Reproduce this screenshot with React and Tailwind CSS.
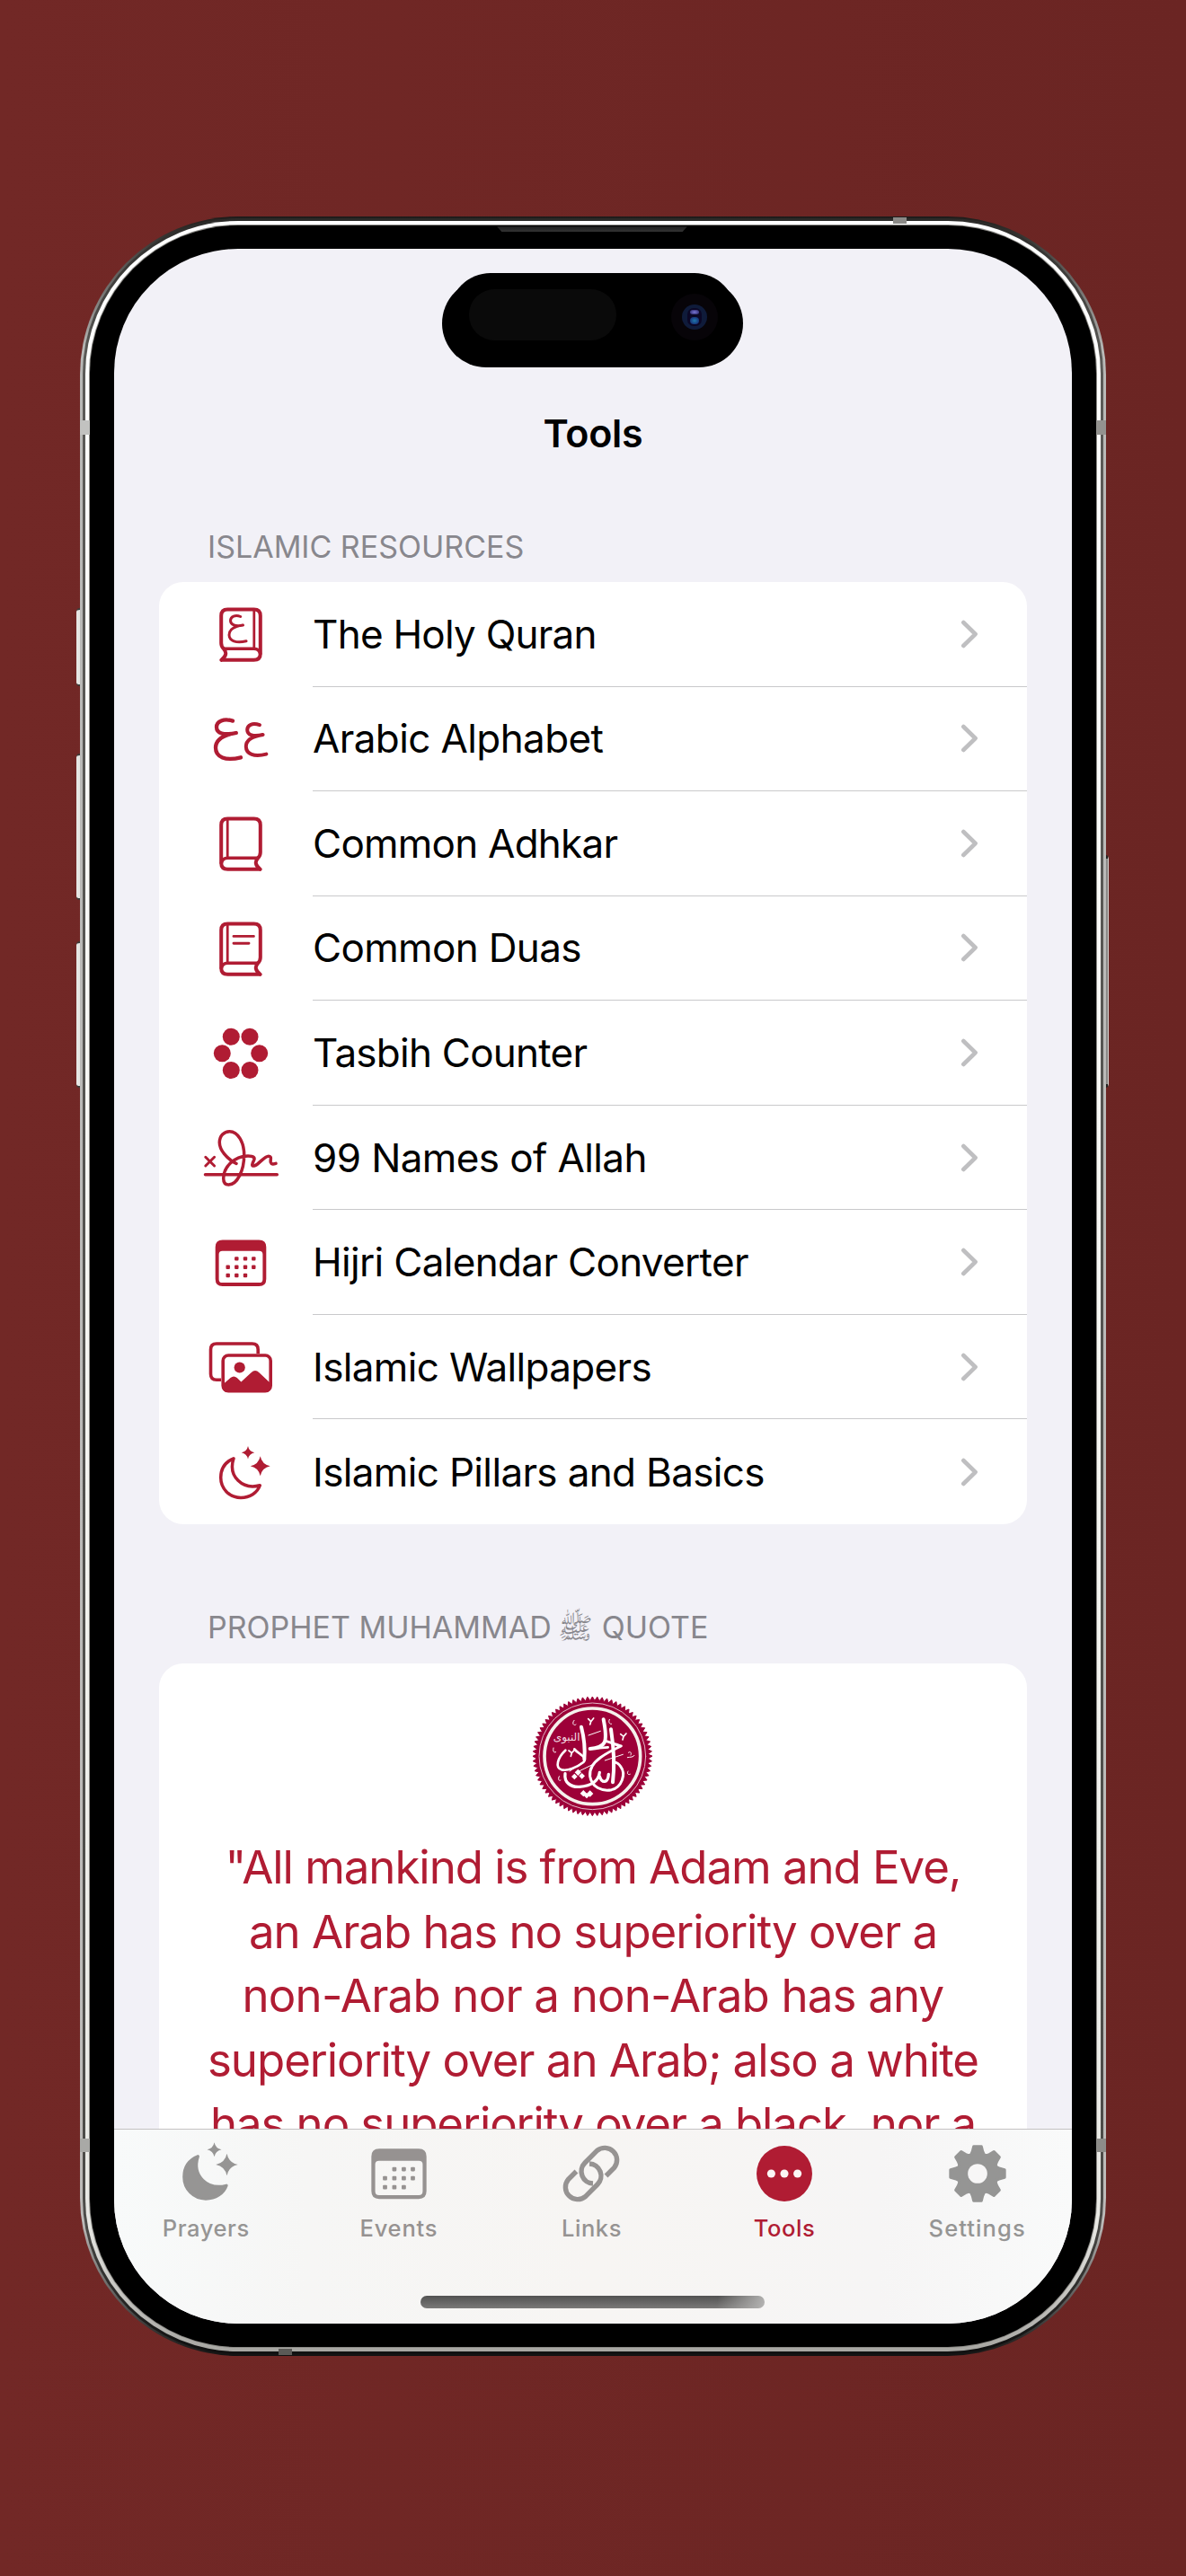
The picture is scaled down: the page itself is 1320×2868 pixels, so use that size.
function Book({ mirrored, children }) {
  return (
    <g>
      <g transform={mirrored ? "translate(96 0) scale(-1 1)" : undefined}>
        <path d="M69.6 64.8H33.5Q26.2 64.8 26.2 57.8V15.6Q26.2 8.5 33.3 8.5H62.7Q69.8 8.5 69.8 15.6V46Q69.8 50 67 52.3Q61.5 58.5 69.6 64.8" strokeWidth="4" />
        <path d="M26.4 58Q27.5 52.3 33.5 52.3H67" strokeWidth="3.6" />
        <path d="M33.2 9V52" strokeWidth="2.8" strokeLinecap="butt" />
      </g>
      {children}
    </g>
  );
}

function Star({ x, y, r }) {
  const k = r * 0.17;
  return (
    <path
      fill="currentColor"
      stroke="none"
      d={`M${x} ${y - r}Q${x + k} ${y - k} ${x + r} ${y}Q${x + k} ${y + k} ${x} ${y + r}Q${x - k} ${y + k} ${x - r} ${y}Q${x - k} ${y - k} ${x} ${y - r}Z`}
    />
  );
}

const MOON = "M40 20.8C31 24.5 25.7 32 25.7 42C25.7 54.5 35.5 64.5 48 64.5C58 64.5 66.5 59 69.3 50.8C50 56 33.5 41 40 20.8Z";

const CAL_DOTS = [
  [43.3, 31.4], [53, 31.4], [62.3, 31.4],
  [33.7, 40.7], [43.3, 40.7], [53, 40.7], [62.3, 40.7],
  [33.7, 50], [43.3, 50], [53, 50],
];

function gearPath() {
  const pts = [];
  for (let i = 0; i < 8; i++) {
    const a = (i * Math.PI) / 4 - Math.PI / 2;
    for (const [r, d] of [[20.6, -0.33], [23.5, -0.22], [28, -0.14], [28, 0.14], [23.5, 0.22], [20.6, 0.33]]) {
      pts.push(`${(48 + r * Math.cos(a + d)).toFixed(2)} ${(36 + r * Math.sin(a + d)).toFixed(2)}`);
    }
  }
  return `M${pts.join("L")}Z`;
}

const ICONS = {
  quran: (
    <Book mirrored>
      <path d="M47.7 16.5C42 14 36.5 16.5 36.5 21C36.5 25.5 42 27.8 50.5 26C41 27.2 35 31 35 37C35 43.5 43 46.5 54 43.7" strokeWidth="3" />
    </Book>
  ),
  alphabet: (
    <g strokeWidth="4.3">
      <path d="M39 15.6C29 12.5 21 16 21 22.5C21 29.5 29 32 42.8 29C27 31.5 20 37.5 20 45.5C20 56 31 60.5 48 56.3" />
      <path d="M69 20.2C61 17.5 55.2 20 55.2 25.5C55.2 31.5 62 33.5 72.6 31C60 33 53.8 38 53.8 44C53.8 52.8 63 56 76.4 52.6" strokeWidth="4" />
    </g>
  ),
  book: <Book />,
  duas: (
    <Book>
      <path d="M40 22.4H62.4M40 30.3H57" strokeWidth="2.9" />
    </Book>
  ),
  tasbih: (
    <g fill="currentColor" stroke="none">
      {[[37.3, 18.2], [58, 18.2], [27.3, 36.8], [68.7, 36.8], [37.3, 55.5], [58, 55.5]].map(([x, y]) => (
        <circle key={`${x}-${y}`} cx={x} cy={y} r="9.5" />
      ))}
    </g>
  ),
  signature: (
    <g strokeWidth="3.5">
      <path d="M8.5 54.7H88.3" />
      <path d="M8.8 35.3L18.6 45M18.6 35.3L8.8 45" strokeWidth="3" />
      <path d="M43 42.5C32 37 24.3 27 24.3 19C24.3 11.5 29.5 6.7 35.5 6.7C45 6.7 51.7 19 51.7 33C51.7 50 44 66 34.5 66C30 66 28.7 63 28.7 59C28.7 47 40 34.3 56 34C62.5 34 64 36 62.5 39C61 42 59 46.3 63.5 44.8C68 43.5 74 34.2 79 34.2C83 34.4 80.6 38 81.3 41C82 43.5 84.5 43.2 87 42.4" />
    </g>
  ),
  calendar: (
    <g fill="currentColor" stroke="none">
      <path fillRule="evenodd" d="M27.7 10.4H68.3Q76.3 10.4 76.3 18.4V54Q76.3 62 68.3 62H27.7Q19.7 62 19.7 54V18.4Q19.7 10.4 27.7 10.4ZM27.5 22.8Q23.6 22.8 23.6 26.6V54.2Q23.6 58.1 27.5 58.1H68.5Q72.4 58.1 72.4 54.2V26.6Q72.4 22.8 68.5 22.8Z" />
      {CAL_DOTS.map(([x, y]) => (
        <rect key={`${x}-${y}`} x={x - 2.2} y={y - 2.2} width="4.4" height="4.4" rx="1" />
      ))}
    </g>
  ),
  photos: (
    <g strokeWidth="3.6">
      <path d="M26 50.3H21Q14.5 50.3 14.5 43.8V16.5Q14.5 10 21 10H60.7Q67.2 10 67.2 16.5V21" strokeLinecap="butt" />
      <rect x="28.2" y="23" width="53" height="39.8" rx="6" />
      <circle cx="46.7" cy="36.5" r="6.1" fill="currentColor" stroke="none" />
      <path fill="currentColor" stroke="none" d="M29 54.6L36.5 48Q40.2 44.8 43.8 48L48.4 52.4L59.5 42.2Q64 38 68.5 42.2L81 54V58Q81 64 76 64H33Q28 64 28 58Z" />
    </g>
  ),
  moon: (
    <g>
      <path d={MOON} strokeWidth="3.5" />
      <Star x={56} y={14.3} r={7.2} />
      <Star x={69.7} y={29.3} r={11} />
    </g>
  ),
  moonFill: (
    <g transform="translate(0 -2.6)">
      <path d={MOON} fill="currentColor" strokeWidth="3" />
      <Star x={56.8} y={14} r={7.4} />
      <Star x={69.7} y={29.3} r={11.3} />
    </g>
  ),
  link: (
    <g transform="translate(48 36) scale(0.925)" strokeWidth="5.4" strokeLinecap="butt">
      <path d="M16.5 2.5L25.5-6.5A13.5 13.5 0 0 0 6.5-25.5L-7-12A13.5 13.5 0 0 0 2 11" />
      <path d="M16.5 2.5L25.5-6.5A13.5 13.5 0 0 0 6.5-25.5L-7-12A13.5 13.5 0 0 0 2 11" transform="rotate(180)" />
    </g>
  ),
  more: (
    <g stroke="none">
      <circle cx="48" cy="36" r="28.6" fill="currentColor" />
      <g fill="#fbf6f5">
        <circle cx="34.5" cy="36" r="4.2" />
        <circle cx="48" cy="36" r="4.2" />
        <circle cx="61.5" cy="36" r="4.2" />
      </g>
    </g>
  ),
  gear: (
    <g>
      <path d={gearPath()} fill="currentColor" strokeWidth="3" />
      <circle cx="48" cy="36" r="10" fill="#f7f6f6" stroke="none" />
    </g>
  ),
};

function Icon({ name, className }) {
  return (
    <svg viewBox="0 0 96 72" className={className} fill="none" stroke="currentColor" strokeWidth="4" strokeLinecap="round" strokeLinejoin="round">
      {ICONS[name]}
    </svg>
  );
}

const ROWS = [
  ["quran", "The Holy Quran", "tracking-[-0.76px]"],
  ["alphabet", "Arabic Alphabet", "tracking-[-0.6px]"],
  ["book", "Common Adhkar", "tracking-[-0.76px]"],
  ["duas", "Common Duas", "tracking-[-0.66px]"],
  ["tasbih", "Tasbih Counter", "tracking-[-0.76px]"],
  ["signature", "99 Names of Allah", "tracking-[-0.6px]"],
  ["calendar", "Hijri Calendar Converter", "tracking-[-0.67px]"],
  ["photos", "Islamic Wallpapers", "tracking-[-0.65px]"],
  ["moon", "Islamic Pillars and Basics", "tracking-[-0.65px]"],
];

const TABS = [
  ["moonFill", "Prayers", "text-[#969594]", "tracking-[0.6px]"],
  ["calendar", "Events", "text-[#969291]", "tracking-[0.8px]"],
  ["link", "Links", "text-[#969392]", "tracking-[0.6px]"],
  ["more", "Tools", "text-[#b01c33]", "tracking-[0.6px]"],
  ["gear", "Settings", "text-[#959594]", "tracking-[1.1px]"],
];

const QUOTE = [
  ["\"All mankind is from Adam and Eve,", "tracking-[-1.06px]"],
  ["an Arab has no superiority over a", "tracking-[-1.03px]"],
  ["non-Arab nor a non-Arab has any", "tracking-[-0.82px]"],
  ["superiority over an Arab; also a white", "tracking-[-1.04px]"],
  ["has no superiority over a black, nor a", "tracking-[-1.1px]"],
];

function sealEdge() {
  const pts = [];
  const n = 76;
  for (let i = 0; i < n * 2; i++) {
    const a = (i * Math.PI) / n;
    const r = i % 2 ? 186 : 199;
    pts.push(`${(298 + r * Math.cos(a)).toFixed(1)} ${(258 + r * Math.sin(a)).toFixed(1)}`);
  }
  return `M${pts.join("L")}Z`;
}

function Seal() {
  return (
    <svg viewBox="90 50 420 420" className="h-[140px] w-[140px]" fill="none" strokeLinecap="round" strokeLinejoin="round">
      <path d={sealEdge()} fill="#9d0038" stroke="#9d0038" strokeWidth="3" />
      <circle cx="298" cy="258" r="178" stroke="#e3b9c6" strokeWidth="3" />
      <circle cx="298" cy="258" r="160" stroke="#f5f1ec" strokeWidth="11" />
      <g stroke="#fff" strokeWidth="12">
        <path d="M261 160C270 195 274 235 271 268" />
        <path d="M238 234C250 250 285 262 268 278C245 296 215 308 195 303C172 296 182 262 208 238" strokeWidth="8" />
        <path d="M335 135C340 160 346 195 338 212C330 228 306 232 290 233" />
        <path d="M292 233L350 228" strokeWidth="8" />
        <path d="M360 168C368 220 374 280 366 345" />
        <path d="M345 208C365 214 385 222 394 224C370 235 345 248 325 262C300 280 287 300 290 325C296 362 330 376 362 370C395 362 412 318 392 292C385 280 376 278 368 276" strokeWidth="9" />
        <path d="M207 316C203 345 225 362 255 360C290 357 318 345 322 312M322 325C330 350 350 348 352 318" strokeWidth="10" />
      </g>
      <g stroke="#fff" strokeWidth="3">
        <path d="M285 188L325 174M340 272L400 252M222 308L268 276M245 312L300 285" />
        <path d="M237 138C228 148 236 158 243 152M355 135C350 145 356 152 362 150M168 230C165 242 170 248 176 244M187 325C182 335 186 342 192 338M417 308C412 316 418 322 424 318M415 262C425 260 435 262 438 255M418 246C424 240 430 246 426 254" />
      </g>
      <g stroke="#fff" strokeWidth="5">
        <path d="M284 133L293 142L302 131M293 142L290 152M392 184L402 192L411 182M402 192L399 203M219 239L229 247L239 236M229 247L226 258" />
      </g>
      <path fill="#fff" d="M250 301l11 11-11 11-11-11zM238 316l10 10-10 10-10-10zM263 314l10 10-10 10-10-10zM268 371l11 11-11 11-11-11zM290 372l11 11-11 11-11-11zM279 381l9 9-9 9-9-9z" />
      <text x="212" y="206" fill="#f3dde4" fontSize="36" textAnchor="middle" fontFamily="DejaVu Sans">النبوى</text>
    </svg>
  );
}

function Phone({ children }) {
  return (
    <div className="relative h-[2382px] w-[1142px]">
      <div className="absolute left-[-4px] top-[436px] h-[87px] w-[8px] rounded-[4px] border-y-2 border-[#3c3b38] bg-[#e6e6e3]" />
      <div className="absolute left-[-4px] top-[598px] h-[163px] w-[8px] rounded-[4px] border-y-2 border-[#3c3b38] bg-[#e6e6e3]" />
      <div className="absolute left-[-4px] top-[807px] h-[163px] w-[8px] rounded-[4px] border-y-2 border-[#3c3b38] bg-[#e6e6e3]" />
      <div className="absolute right-[-3px] top-[711px] h-[259px] w-[8px] rounded-[4px] border-y-4 border-r border-y-[#22211f] border-r-[#d0cfcd] bg-[#8a8886]" />
      <div className="relative h-full rounded-[176px] bg-[linear-gradient(180deg,#1c1b1a_0,#25221f_4px,#b9b9b7_150px,#bdbbb9_2232px,#1a1918_2378px,#111_100%)] px-[3px] py-[2px]">
        <div className="h-full rounded-[173px] bg-[linear-gradient(180deg,#2b2a28_0,#5c5b58_160px,#4c4b48_2230px,#111_2370px)] px-[3px] py-[3px]">
          <div className="h-full rounded-[170px] bg-[linear-gradient(180deg,#fff_0,#f4f4f0_60%,#e8e8e4_2230px,#a8a7a3_2370px)] px-[4px] py-[4px]">
            <div className="h-full rounded-[166px] bg-[#8b8a86] p-px">
              <div className="h-full rounded-[165px] bg-black px-[27px] py-[26px]">
                <div className="relative flex h-full flex-col overflow-hidden rounded-[138px] bg-[#f2f1f7]">{children}</div>
              </div>
            </div>
          </div>
        </div>
      </div>
      <div className="absolute left-0 top-[227px] h-[16px] w-[11px] bg-[#c2c2c0]" />
      <div className="absolute right-0 top-[227px] h-[16px] w-[11px] bg-[#93928f]" />
      <div className="absolute left-0 top-[2140px] h-[15px] w-[11px] bg-[#a9a9a6]" />
      <div className="absolute right-0 top-[2140px] h-[15px] w-[11px] bg-[#8d8c89]" />
      <div className="absolute left-[905px] top-px h-[7px] w-[15px] bg-[#8b8a87]" />
      <div className="absolute bottom-px left-[221px] h-[7px] w-[15px] bg-[#5b5a57]" />
      <div className="absolute left-[464px] top-[11px] h-[6px] w-[212px] bg-[linear-gradient(180deg,#1d1d1d,#343434)] [clip-path:polygon(0_0,100%_0,97.5%_100%,2.5%_100%)]" />
    </div>
  );
}

function Island() {
  return (
    <div className="absolute left-[365px] top-[27px] h-[105px] w-[335px]">
      <div className="absolute left-[8px] top-0 h-[92px] w-[319px] rounded-full bg-black" />
      <div className="absolute inset-x-0 top-[7px] h-[98px] rounded-full bg-black" />
      <div className="absolute left-[30px] top-[18px] h-[57px] w-[164px] rounded-full bg-[#0a0a0a]" />
      <div className="absolute left-[255px] top-[23px] flex h-[52px] w-[52px] items-center justify-center rounded-full bg-[#070408]">
        <div className="flex h-[28px] w-[28px] items-center justify-center rounded-full bg-[#0f1b3a]">
          <div className="flex h-[20px] w-[16px] flex-col items-center justify-between rounded-[7px] bg-[#0b0725] py-[2px]">
            <div className="h-[5px] w-[10px] rounded-full bg-[radial-gradient(#7a78d8,#201a58)]" />
            <div className="h-[8px] w-[10px] rounded-full bg-[radial-gradient(#1f78ac,#131a66)]" />
          </div>
        </div>
      </div>
    </div>
  );
}

export default function App() {
  return (
    <div className="h-[2868px] w-[1320px] overflow-hidden bg-[linear-gradient(90deg,#722826,#6b2523)] pl-[89px] pt-[241px] font-[Inter,sans-serif]">
      <Phone>
        <Island />
        <main className="flex-1 overflow-hidden px-[50px] pt-[179px]">
          <h1 className="text-center text-[43px] font-semibold leading-[52px] tracking-[-0.3px] text-black">Tools</h1>
          <h2 className="mt-[80px] pl-[54px] text-[34px] leading-[42px] text-[#88878d]">ISLAMIC RESOURCES</h2>
          <ul className="mt-[18px] h-[1049px] rounded-[27px] bg-white">
            {ROWS.map(([icon, label, tracking], i) => (
              <li key={label} className="flex h-[116.55px] items-center pl-[43px] text-[#b01c33]">
                <Icon name={icon} className="h-[72px] w-[96px] shrink-0" />
                <div className={`ml-[32px] flex h-full flex-1 items-center justify-between pr-[54px] ${i < 8 ? "border-b border-[#c9c9cb]" : ""}`}>
                  <span className={`whitespace-nowrap text-[44px] leading-[52px] text-black ${tracking}`}>{label}</span>
                  <svg viewBox="0 0 20 32" className="h-[32px] w-[20px]" fill="none" stroke="#bfbfc1" strokeWidth="4.6" strokeLinecap="round" strokeLinejoin="round">
                    <path d="M3.3 3L16.6 16L3.3 29" />
                  </svg>
                </div>
              </li>
            ))}
          </ul>
          <h2 className="mt-[94px] h-[42px] whitespace-nowrap pl-[54px] text-[34px] leading-[42px] text-[#88878d]">
            PROPHET MUHAMMAD <span className="-ml-[2px] text-[32px] leading-none tracking-[-1.5px]">ﷺ</span> QUOTE
          </h2>
          <section className="mt-[19px] flex h-[900px] flex-col items-center rounded-[27px] bg-white pt-[34px]">
            <Seal />
            <p className="mt-[17px] text-center text-[51px] leading-[71.5px] text-[#b01c33]">
              {QUOTE.map(([line, tracking]) => (
                <span key={line} className={`block whitespace-nowrap ${tracking}`}>{line}</span>
              ))}
            </p>
          </section>
        </main>
        <nav className="relative flex h-[217px] shrink-0 border-t border-[#c4c2c3] bg-[linear-gradient(90deg,#f8fafa,#f6f6f5_20%,#f7f5f3_50%,#f6f5f5_80%,#f9fafa)] pt-[10px]">
          <div className="-ml-[5px] -mr-[2px] flex flex-1">
            {TABS.map(([icon, label, color, tracking]) => (
              <div key={label} className={`flex flex-1 flex-col items-center ${color}`}>
                <Icon name={icon} className="h-[78px] w-[104px]" />
                <span className={`mt-[6px] text-[25.5px] font-medium leading-[32px] ${tracking}`}>{label}</span>
              </div>
            ))}
          </div>
          <div className="absolute left-[341px] top-[185px] h-[14px] w-[383px] rounded-full bg-[linear-gradient(100deg,transparent_86%,#b4b3b2_100%),linear-gradient(180deg,#525252,#7a7978)]" />
        </nav>
      </Phone>
    </div>
  );
}
